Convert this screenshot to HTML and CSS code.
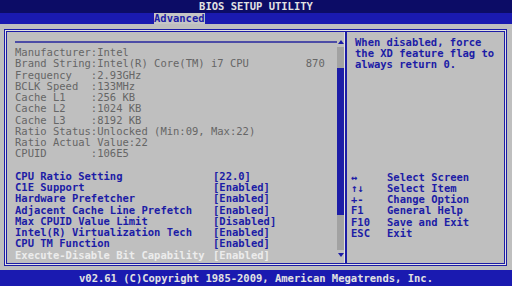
FILE: index.html
```html
<!DOCTYPE html>
<html lang="en">
<head>
  <meta charset="UTF-8" />
  <title>BIOS Setup Utility</title>
  <link rel="stylesheet" href="styles.css">
</head>
<body>
  <div class="title">BIOS SETUP UTILITY</div>
  <div class="tabs"><span class="tab">Advanced</span></div>

  <div class="frame">
    <div class="left">
      <div class="rule"></div>
      <div class="rows">
        <div class="info">Manufacturer:Intel</div>
        <div class="info">Brand String:Intel(R) Core(TM) i7 CPU         870</div>
        <div class="info">Frequency   :2.93GHz</div>
        <div class="info">BCLK Speed  :133MHz</div>
        <div class="info">Cache L1    :256 KB</div>
        <div class="info">Cache L2    :1024 KB</div>
        <div class="info">Cache L3    :8192 KB</div>
        <div class="info">Ratio Status:Unlocked (Min:09, Max:22)</div>
        <div class="info">Ratio Actual Value:22</div>
        <div class="info">CPUID       :106E5</div>
        <div class="blank"></div>
        <div class="setting"><span class="label">CPU Ratio Setting</span><span>[22.0]</span></div>
        <div class="setting"><span class="label">C1E Support</span><span>[Enabled]</span></div>
        <div class="setting"><span class="label">Hardware Prefetcher</span><span>[Enabled]</span></div>
        <div class="setting"><span class="label">Adjacent Cache Line Prefetch</span><span>[Enabled]</span></div>
        <div class="setting"><span class="label">Max CPUID Value Limit</span><span>[Disabled]</span></div>
        <div class="setting"><span class="label">Intel(R) Virtualization Tech</span><span>[Enabled]</span></div>
        <div class="setting"><span class="label">CPU TM Function</span><span>[Enabled]</span></div>
        <div class="setting selected"><span class="label">Execute-Disable Bit Capability</span><span>[Enabled]</span></div>
      </div>
    </div>

    <div class="scrollbar">
      <div class="arrow-box up"><span class="arrow-up"></span></div>
      <div class="track"></div>
      <div class="thumb"></div>
      <div class="track fill"></div>
      <div class="arrow-box down"><span class="arrow-down"></span></div>
    </div>
    <div class="divider"></div>

    <div class="right">
      <p class="help">When disabled, force<br>the XD feature flag to<br>always return 0.</p>
      <div class="keys">
        <div class="key-row"><span class="key">&#8596;</span><span>Select Screen</span></div>
        <div class="key-row"><span class="key">&#8593;&#8595;</span><span>Select Item</span></div>
        <div class="key-row"><span class="key">+-</span><span>Change Option</span></div>
        <div class="key-row"><span class="key">F1</span><span>General Help</span></div>
        <div class="key-row"><span class="key">F10</span><span>Save and Exit</span></div>
        <div class="key-row"><span class="key">ESC</span><span>Exit</span></div>
      </div>
    </div>
  </div>

  <div class="footer">v02.61 (C)Copyright 1985-2009, American Megatrends, Inc.</div>
</body>
</html>
```

FILE: styles.css
```css
:root {
  --bg: #bfbfbf;
  --blue: #1c1ca6;
  --navy: #0c0c66;
  --band: #1a1ab0;
  --info: #666666;
  --light: #e2e2e2;
}

html, body {
  height: 286px;
  overflow: hidden;
}

body {
  margin: 0;
  background-color: var(--bg);
  font-family: "DejaVu Sans Mono", "Liberation Mono", monospace;
  font-size: 10.5px;
  font-weight: bold;
  color: var(--blue);
}

.title {
  height: 13px;
  line-height: 13px;
  background-color: var(--navy);
  color: var(--light);
  text-align: center;
}

.tabs {
  height: 11px;
  line-height: 11px;
  background-color: var(--band);
  padding-left: 154px;
}

.tab {
  display: inline-block;
  height: 11px;
  background-color: #c6c6c6;
  color: var(--blue);
}

.frame {
  display: flex;
  height: 237px;
  box-sizing: border-box;
  margin: 5px 5px 0 4px;
  padding: 2px;
  border: 1px solid var(--blue);
  box-shadow: inset 0 0 0 1px var(--light), inset 0 0 0 2px var(--blue);
}

.left {
  width: 330px;
  box-sizing: border-box;
  padding-left: 8px;
}

.rule {
  height: 2px;
  margin-top: 9px;
  background-color: #4c4ca6;
}

.rows {
  margin-top: 4px;
  line-height: 11.25px;
}

.info {
  color: var(--info);
  font-weight: normal;
  white-space: pre;
}

.blank {
  height: 11.25px;
}

.setting {
  display: flex;
}

.setting .label {
  width: 198px;
}

.setting.selected {
  color: #ececec;
}

.scrollbar {
  display: flex;
  flex-direction: column;
  width: 7px;
}

.arrow-box {
  display: flex;
  justify-content: center;
}

.arrow-box.up {
  height: 15px;
  padding-top: 8px;
  box-sizing: border-box;
}

.arrow-box.down {
  height: 13px;
  padding-top: 3px;
  box-sizing: border-box;
}

.arrow-up, .arrow-down {
  width: 0;
  height: 0;
  border-left: 3px solid transparent;
  border-right: 3px solid transparent;
}

.arrow-up {
  border-bottom: 4px solid var(--blue);
}

.arrow-down {
  border-top: 4px solid var(--blue);
}

.track {
  height: 21px;
  background-color: #a2a2a2;
}

.track.fill {
  height: auto;
  flex: 1;
}

.thumb {
  height: 147px;
  background-color: var(--blue);
}

.divider {
  width: 2px;
  border-left: 1px solid var(--light);
  background-color: var(--blue);
}

.right {
  flex: 1;
  padding: 4.5px 0 0 4px;
}

.help {
  margin: 0 0 0 4px;
  line-height: 11px;
}

.keys {
  margin-top: 102px;
  line-height: 11.25px;
}

.key-row {
  display: flex;
}

.key {
  width: 36px;
}

.footer {
  height: 16px;
  line-height: 16px;
  margin-top: 4px;
  background-color: var(--band);
  color: var(--light);
  text-align: center;
}
```
